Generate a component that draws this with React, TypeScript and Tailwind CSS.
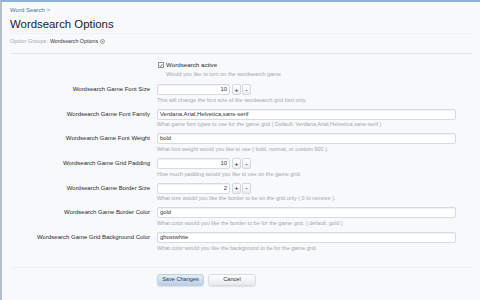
import React from "react";

type Row = {
  label: string;
  kind: "text" | "spin";
  value: string;
  hint: string;
};

const rows: Row[] = [
  {
    label: "Wordsearch Game Font Size",
    kind: "spin",
    value: "10",
    hint: "This will change the font size of the wordsearch grid font only.",
  },
  {
    label: "Wordsearch Game Font Family",
    kind: "text",
    value: "Verdana,Arial,Helvetica,sans-serif",
    hint: "What game font types to use for the game grid ( Default: Verdana,Arial,Helvetica,sans-serif )",
  },
  {
    label: "Wordsearch Game Font Weight",
    kind: "text",
    value: "bold",
    hint: "What font weight would you like to use ( bold, normal, or custom 900 ).",
  },
  {
    label: "Wordsearch Game Grid Padding",
    kind: "spin",
    value: "10",
    hint: "How much padding would you like to use on the game grid.",
  },
  {
    label: "Wordsearch Game Border Size",
    kind: "spin",
    value: "2",
    hint: "What size would you like the border to be on the grid only ( 0 to remove ).",
  },
  {
    label: "Wordsearch Game Border Color",
    kind: "text",
    value: "gold",
    hint: "What color would you like the border to be for the game grid. ( default: gold )",
  },
  {
    label: "Wordsearch Game Grid Background Color",
    kind: "text",
    value: "ghostwhite",
    hint: "What color would you like the background to be for the game grid.",
  },
];

const inputClassName =
  "h-[11px] rounded-[2px] border border-[#d6dbe2] bg-white px-[2px] text-[5.9px] leading-[9px] text-[#333] shadow-[inset_0_1px_1px_rgba(0,0,0,0.06)]";

const spinButtonClassName =
  "flex h-[11px] w-[9px] items-center justify-center rounded-[2px] border border-[#d3d8de] bg-gradient-to-b from-white to-[#e9ecf0] text-[6px] leading-none text-[#333] font-bold";

function FormRow({ row }: { row: Row }) {
  return (
    <div className="flex h-[24.7px] items-start">
      <div className="w-[140px] text-right text-[6px] leading-[11px] text-[#2a2a2a]">
        {row.label}
      </div>
      <div className="ml-[7px] flex w-[299px] flex-col">
        {row.kind === "spin" ? (
          <div className="flex items-center gap-[1.5px]">
            <div className={`${inputClassName} w-[73px] text-right`}>{row.value}</div>
            <div className="ml-[0.5px] flex gap-[1px]">
              <span className={spinButtonClassName}>+</span>
              <span className={spinButtonClassName}>-</span>
            </div>
          </div>
        ) : (
          <div className={`${inputClassName} w-[299px]`}>{row.value}</div>
        )}
        <p className="mt-[0.5px] text-[5.5px] leading-[9px] text-[#a3a7ad]">{row.hint}</p>
      </div>
    </div>
  );
}

export default function App() {
  return (
    <div className="h-[300px] w-[480px] overflow-hidden border-t-2 border-l-2 border-t-[#8fb1d3] border-l-[#b6bec7] bg-[#f8f9fb] font-['Liberation_Sans',Arial,sans-serif]">
      <div className="pl-[8px] pr-[10px]">
        <div className="pt-[4px] text-[6px] leading-[8px] text-[#4d74a8]">Word Search &gt;</div>
        <h1 className="mt-[3px] text-[11.4px] leading-[14px] text-[#222]">Wordsearch Options</h1>
        <div className="mt-[2px] border-b border-[#eef0f4]" />
        <div className="mt-[3px] flex items-center text-[5.6px] leading-[8px]">
          <span className="text-[#a3a7ad]">Option Groups:</span>
          <span className="ml-[2px] text-[5.3px] text-[#333]">Wordsearch Options</span>
          <span className="ml-[1.5px] flex h-[5px] w-[5px] items-center justify-center rounded-full border border-[#9aa0a8] bg-white">
            <svg viewBox="0 0 6 6" className="h-[3px] w-[3px]">
              <path d="M1 2 L5 2 L3 4.5 Z" fill="#555" />
            </svg>
          </span>
        </div>
        <div className="mt-[8px] mr-[-2px] border-b border-[#e4e7ec]" />

        <div className="mt-[7px] flex">
          <div className="w-[140px]" />
          <div className="ml-[8px] flex flex-col">
            <div className="flex items-center">
              <span className="flex h-[6px] w-[6px] items-center justify-center border border-[#8c939b] bg-white">
                <svg viewBox="0 0 8 8" className="h-[5px] w-[5px]">
                  <path d="M1.2 4.2 L3.2 6.2 L6.8 1.5" stroke="#333" strokeWidth="1.3" fill="none" />
                </svg>
              </span>
              <span className="ml-[2px] text-[6.2px] leading-[8px] text-[#2a2a2a]">Wordsearch active</span>
            </div>
            <p className="ml-[8px] mt-[1px] text-[5.5px] leading-[9px] text-[#a3a7ad]">
              Would you like to turn on the wordsearch game
            </p>
          </div>
        </div>

        <div className="mt-[5px] flex flex-col">
          {rows.map((row) => (
            <FormRow key={row.label} row={row} />
          ))}
        </div>

        <div className="mt-[10px] ml-[2px] mr-[-2px] border-b border-[#eceef2]" />

        <div className="mt-[6px] flex gap-[4px] pl-[147px]">
          <button
            type="button"
            className="h-[12px] w-[47px] rounded-[3px] border border-[#bfd0e2] bg-gradient-to-b from-[#e6eef8] to-[#b9cfe8] text-[5.6px] font-medium leading-none text-[#2c3b4d] shadow-[0_1px_1px_rgba(0,0,0,0.1)]"
          >
            Save Changes
          </button>
          <button
            type="button"
            className="h-[12px] w-[48px] rounded-[3px] border border-[#d8dce2] bg-gradient-to-b from-white to-[#e6e9ed] text-[5.6px] leading-none text-[#333] shadow-[0_1px_1px_rgba(0,0,0,0.1)]"
          >
            Cancel
          </button>
        </div>
      </div>
    </div>
  );
}
